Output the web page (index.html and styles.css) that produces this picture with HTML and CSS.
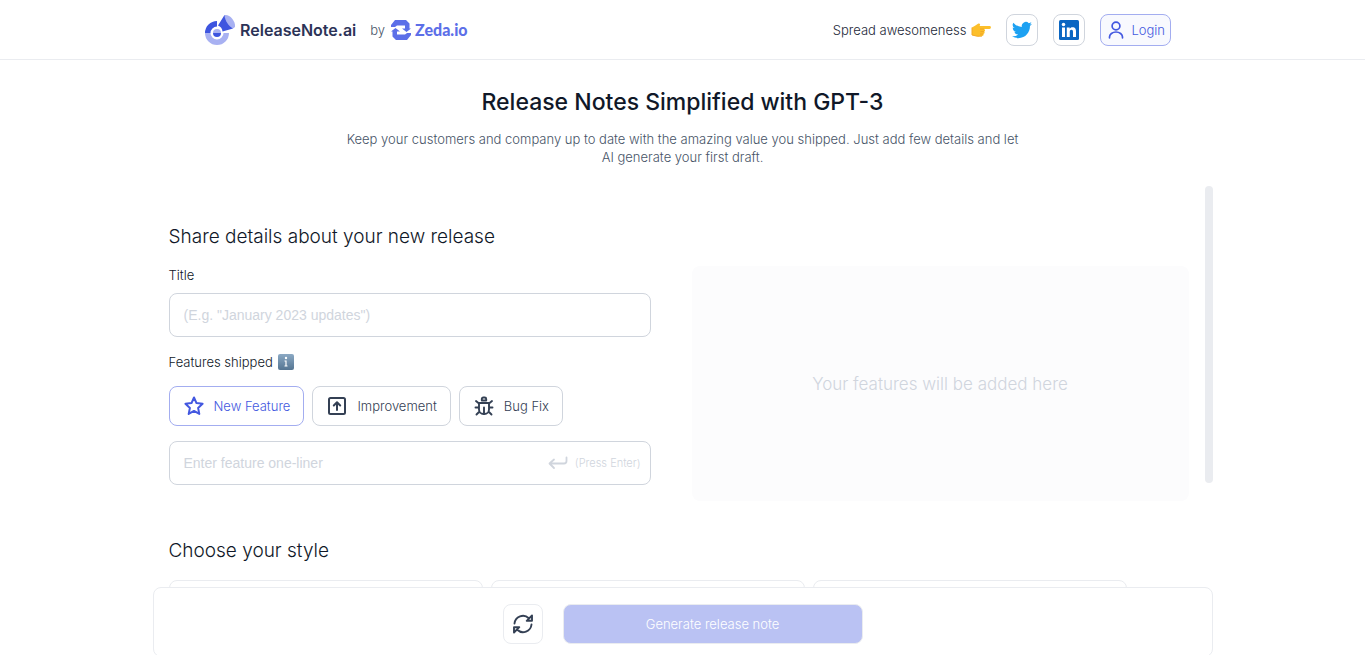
FILE: index.html
```html
<!DOCTYPE html>
<html lang="en">
<head>
    <meta charset="UTF-8">
    <meta name="viewport" content="width=device-width, initial-scale=1.0">
    <title>ReleaseNote.ai</title>
    <link rel="stylesheet" href="styles.css">
</head>
<body>
    <header class="header">
        <div class="header-inner">
            <div class="brand">
                <a href="#" class="logo">
                    <svg width="32" height="32" viewBox="0 0 32 32" aria-hidden="true">
                        <path d="M1 19a12 12 0 0 0 24 0h-5.500a6.500 6.500 0 0 1-13 0z" fill="#a8b1f2"/>
                        <path d="M1 19A12 12 0 0 1 13 7v5.500A6.500 6.500 0 0 0 6.500 19z" fill="#3e55df"/>
                        <path d="M14 11.500 20.500 1 29 14.500 18.500 17.500A7 7 0 0 0 14 11.500z" fill="#3e55df"/>
                        <path d="M20.500 1c3-.5 5.500 1 7.500 3.500s3.500 5.500 3 8.500l-2 1.500C24.500 12 21 7 20.500 1z" fill="#a8b1f2"/>
                        <path d="M9 19a4 4 0 0 1 8 0z" fill="#a8b1f2"/>
                        <path d="M9 19a4 4 0 0 0 8 0z" fill="#3e55df"/>
                    </svg>
                    <span>ReleaseNote.ai</span>
                </a>
                <span class="by">by</span>
                <a href="#" class="zeda">
                    <svg width="20" height="20" viewBox="0 0 20 20" fill="#5c6fe8" aria-hidden="true">
                        <path d="M0 7V5l4-5h11l3.500 3.500v5H20L15.500 12 11 8.500h3V5.500H6L4 7z"/>
                        <path d="M20 13v2l-4 5H5l-3.500-3.500v-5H0L4.500 8 9 11.500H6v3h8l2-1.500z"/>
                    </svg>
                    <span>Zeda.io</span>
                </a>
            </div>
            <nav class="actions">
                <span class="spread">Spread awesomeness
                    <svg width="20" height="14" viewBox="0 0 20 14" aria-hidden="true">
                        <path d="M1 4.500C3 3.500 5 2 7 .8c1.500-.8 2.500.2 2 1.500L8.500 3H18.500a1.400 1.400 0 0 1 0 2.900H13c1.500.6 1.300 2.300.2 2.700.8.8.4 2.100-.7 2.400.4 1-.3 2-1.500 2.100-3 .3-5.500.2-7-.4L1 12z" fill="#fcbf2b"/>
                        <path d="M9 6h4M9.500 8.600h3.500M9 11h3" stroke="#eda023" stroke-width=".8" fill="none"/>
                        <path d="M1 4.500v7.500l3 .7c1.500.6 4 .7 7 .4" stroke="#f2a928" fill="none"/>
                    </svg>
                </span>
                <a href="#" class="social" aria-label="Twitter">
                    <svg width="20" height="20" viewBox="0 0 24 24" aria-hidden="true">
                        <path fill="#1da1f2" d="M23.950 4.600a10 10 0 0 1-2.820.77 4.900 4.900 0 0 0 2.160-2.720 9.900 9.900 0 0 1-3.120 1.190 4.920 4.920 0 0 0-8.380 4.480A13.900 13.900 0 0 1 1.640 3.160a4.900 4.900 0 0 0 1.520 6.570 4.900 4.900 0 0 1-2.230-.61v.06a4.920 4.920 0 0 0 3.950 4.830 5 5 0 0 1-2.210.08 4.940 4.940 0 0 0 4.600 3.420A9.870 9.870 0 0 1 0 19.540a14 14 0 0 0 7.550 2.210c9.050 0 14-7.500 14-13.980 0-.21 0-.42-.02-.63a9.900 9.900 0 0 0 2.420-2.540z"/>
                    </svg>
                </a>
                <a href="#" class="social" aria-label="LinkedIn">
                    <svg width="20" height="20" viewBox="0 0 20 20" aria-hidden="true">
                        <rect width="20" height="20" rx="1.500" fill="#0a66c2"/>
                        <circle cx="4.500" cy="4.500" r="1.750" fill="#fff"/>
                        <path d="M3 7.500h3V17H3zM7.800 7.500h2.850v1.300c.5-.9 1.500-1.550 2.850-1.550 2.900 0 3.500 1.900 3.500 4.400V17h-3v-4.700c0-1.200-.1-2.500-1.550-2.500-1.500 0-1.700 1.200-1.700 2.400V17H7.800z" fill="#fff"/>
                    </svg>
                </a>
                <button type="button" class="login">
                    <svg width="16" height="18" viewBox="0 0 16 18" fill="none" stroke="#4358e0" stroke-width="1.700" stroke-linecap="round" aria-hidden="true">
                        <circle cx="8" cy="5" r="3.900"/>
                        <path d="M1.500 16.800v-.8a6.500 5 0 0 1 13 0v.8"/>
                    </svg>
                    Login
                </button>
            </nav>
        </div>
    </header>

    <section class="intro">
        <h1>Release Notes Simplified with GPT-3</h1>
        <p>Keep your customers and company up to date with the amazing value you shipped. Just add few details and let AI generate your first draft.</p>
    </section>

    <main class="scroll-area">
        <form class="content" onsubmit="return false;">
            <h2>Share details about your new release</h2>
            <div class="details">
                <div class="fields">
                    <label for="title">Title</label>
                    <input type="text" id="title" class="text-box" placeholder='(E.g. "January 2023 updates")'>

                    <label for="feature">Features shipped
                        <svg width="16" height="16" viewBox="0 0 16 16" aria-hidden="true">
                            <defs>
                                <linearGradient id="infoFill" x2="0" y2="1">
                                    <stop offset="0" stop-color="#8ba9c4"/>
                                    <stop offset="1" stop-color="#557592"/>
                                </linearGradient>
                            </defs>
                            <rect width="16" height="16" rx="2" fill="url(#infoFill)"/>
                            <circle cx="8" cy="4" r="1.200" fill="#fff"/>
                            <path d="M6.500 7H8v5M6.500 12h3" stroke="#fff" stroke-width="1.200" fill="none"/>
                        </svg>
                    </label>
                    <div class="types">
                        <button type="button" class="type active">
                            <svg width="20" height="20" viewBox="0 0 20 20" fill="none" stroke="currentColor" stroke-width="2" stroke-linejoin="round" aria-hidden="true">
                                <path d="m10 1.500 2.500 5.600 6.100.7-4.500 4.100 1.200 6L10 14.900l-5.300 3 1.200-6L1.400 7.800l6.100-.7z"/>
                            </svg>
                            New Feature
                        </button>
                        <button type="button" class="type">
                            <svg width="20" height="20" viewBox="0 0 20 20" fill="none" stroke="currentColor" stroke-width="2" stroke-linecap="round" stroke-linejoin="round" aria-hidden="true">
                                <rect x="2" y="2" width="16" height="16" rx="1.500"/>
                                <path d="M10 14V6.500M6.800 9.500 10 6.300l3.200 3.200"/>
                            </svg>
                            Improvement
                        </button>
                        <button type="button" class="type">
                            <svg width="20" height="20" viewBox="0 0 20 20" fill="none" stroke="currentColor" stroke-width="1.900" stroke-linecap="round" stroke-linejoin="round" aria-hidden="true">
                                <path d="M7.800 4.500V3A1.500 1.500 0 0 1 9.300 1.500h1.400A1.500 1.500 0 0 1 12.200 3v1.500zM5 7h10v6.500a4.500 4.500 0 0 1-4.500 4.500h-1A4.500 4.500 0 0 1 5 13.500zM10 11.500V18M5 7.500 2 5M15 7.500 18 5M5 11.500H1.500M15 11.500h3.500M5.500 15.500l-3 3M14.500 15.500l3 3"/>
                            </svg>
                            Bug Fix
                        </button>
                    </div>
                    <div class="text-box one-liner">
                        <input type="text" id="feature" placeholder="Enter feature one-liner">
                        <svg width="20" height="14" viewBox="0 0 20 14" fill="none" stroke="currentColor" stroke-width="1.800" stroke-linecap="round" stroke-linejoin="round" aria-hidden="true">
                            <path d="M18.500 1.500V5a2.500 2.500 0 0 1-2.500 2.500H2M6 3.500l-4.500 4L6 12"/>
                        </svg>
                        <span class="hint">(Press Enter)</span>
                    </div>
                </div>
                <div class="features">Your features will be added here</div>
            </div>

            <h2>Choose your style</h2>
            <div class="styles">
                <div class="style-card"></div>
                <div class="style-card"></div>
                <div class="style-card"></div>
            </div>
        </form>
        <div class="scroll-thumb"></div>
    </main>

    <footer class="bottom-bar">
        <button type="button" class="reset" aria-label="Reset">
            <svg width="22" height="22" viewBox="0 0 22 22" fill="none" stroke="#344054" stroke-width="1.900" stroke-linecap="round" stroke-linejoin="round" aria-hidden="true">
                <path d="M2.500 10.500a8.500 8.500 0 0 1 14.300-5.300M19.500 11.500A8.500 8.500 0 0 1 5.200 16.800M20 2.500v5.300h-5.300zM2 19.500v-5.300h5.300z"/>
            </svg>
        </button>
        <button type="button" class="generate" disabled>Generate release note</button>
    </footer>
</body>
</html>
```
FILE: styles.css
```css
* { box-sizing: border-box; }
body { display: flex; flex-direction: column; height: 100vh; margin: 0; overflow: hidden; background: #fff; color: #101828; font-family: Inter, "Liberation Sans", sans-serif; font-size: 13px; font-weight: 300; }
h1, h2, p { margin: 0; }
button, input { font: inherit; }
button { cursor: pointer; }
a { color: inherit; text-decoration: none; }
svg { flex: none; }

.header { border-bottom: 1px solid #eaecf0; }
.header-inner { display: flex; align-items: center; justify-content: space-between; max-width: 977px; height: 59px; margin: 0 auto; padding-left: 10px; }
.brand, .logo, .zeda, .actions, .spread { display: flex; align-items: center; }
.logo { gap: 4px; color: #2c3357; font-size: 16px; font-weight: 600; }
.by { margin: 0 6px 0 14px; color: #475467; }
.zeda { gap: 4px; color: #5c6fe8; font-family: Lato, sans-serif; font-size: 16px; font-weight: 900; }
.actions { gap: 15px; }
.spread { gap: 5px; color: #1d2939; }
.social { display: flex; align-items: center; justify-content: center; width: 32px; height: 32px; border: 1px solid #d0d5dd; border-radius: 8px; }
.login { display: flex; align-items: center; gap: 7px; height: 32px; padding: 0 5px 0 7px; border: 1px solid #a3adf0; border-radius: 8px; background: #f8f9fe; color: #4358e0; }

.intro { max-width: 684px; margin: 0 auto; padding: 26px 0 20px; text-align: center; }
.intro h1 { margin-bottom: 12px; font-size: 23px; font-weight: 500; line-height: 32px; }
.intro p { color: #475467; line-height: 18px; }

.scroll-area { display: flex; flex: 1; width: 100%; max-width: 1060px; min-height: 0; margin: 0 auto; overflow: hidden; }
.content { flex: 1; padding: 36px 16px 0; }
.content h2 { margin-bottom: 14px; font-size: 19px; font-weight: 300; line-height: 30px; }
.scroll-thumb { width: 8px; height: 74%; border-radius: 4px; background: #eaecf0; }

.details { display: grid; grid-template-columns: 482fr 497fr; gap: 41px; margin-bottom: 35px; }
.fields { padding-bottom: 16px; }
.fields label { display: flex; align-items: center; gap: 5px; margin-bottom: 9px; line-height: 18px; }
.text-box { display: block; width: 100%; height: 44px; margin-bottom: 16px; padding: 0 14px; border: 1px solid #d0d5dd; border-radius: 8px; background: #fff; }
.text-box, .text-box input { font-family: "Liberation Sans", Arial, sans-serif; font-size: 14px; font-weight: 400; }
input::placeholder { color: #d0d5dd; }
.types { display: flex; gap: 8px; margin: 15px 0; }
.type { display: flex; align-items: center; gap: 10px; height: 40px; padding: 0 13px 0 14px; border: 1px solid #d0d5dd; border-radius: 8px; background: #fff; color: #344054; }
.type.active { border-color: #a3adf0; color: #4358e0; }
.one-liner { display: flex; align-items: center; gap: 7px; margin: 0; padding-right: 9px; color: #d0d5dd; }
.one-liner input { flex: 1; min-width: 0; padding: 0; border: 0; outline: 0; }
.hint { font-family: Inter, sans-serif; font-size: 11px; font-weight: 300; }
.features { display: flex; align-items: center; justify-content: center; border-radius: 8px; background: #fcfcfd; color: #d0d5dd; font-size: 17px; }

.styles { display: grid; grid-template-columns: repeat(3, 1fr); gap: 8px; width: 94%; }
.style-card { height: 120px; border: 1px solid #eaecf0; border-radius: 8px; }

.bottom-bar { display: flex; justify-content: center; gap: 20px; width: 100%; max-width: 1060px; margin: 0 auto -2px; padding: 16px 0 12px; border: 1px solid #eaecf0; border-radius: 8px; background: #fff; }
.reset { display: flex; align-items: center; justify-content: center; width: 40px; height: 40px; padding: 0; border: 1px solid #eaecf0; border-radius: 8px; background: #fff; }
.generate { width: 300px; height: 40px; border: 1px solid #eaecf0; border-radius: 8px; background: #bac2f3; color: #fff; }
```
